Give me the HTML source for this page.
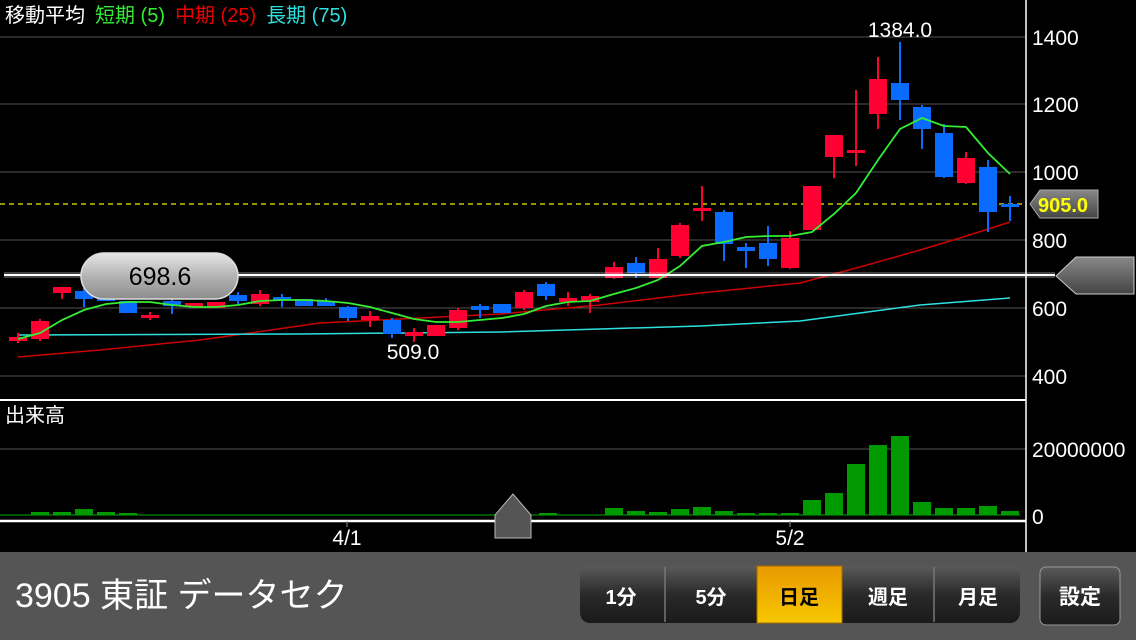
<!DOCTYPE html>
<html><head><meta charset="utf-8"><style>
body{margin:0;width:1136px;height:640px;background:#000;overflow:hidden;font-family:"Liberation Sans","Noto Sans CJK JP",sans-serif}
svg{position:absolute;left:0;top:0}
</style></head><body>
<svg width="1136" height="640" xmlns="http://www.w3.org/2000/svg" font-family="Liberation Sans, Noto Sans CJK JP, sans-serif">
<defs>
<linearGradient id="pill" x1="0" y1="0" x2="0" y2="1"><stop offset="0" stop-color="#e6e6e6"/><stop offset="0.5" stop-color="#b4b4b4"/><stop offset="1" stop-color="#8c8c8c"/></linearGradient>
<linearGradient id="btn" x1="0" y1="0" x2="0" y2="1"><stop offset="0" stop-color="#5a5a5a"/><stop offset="0.5" stop-color="#2a2a2a"/><stop offset="1" stop-color="#1a1a1a"/></linearGradient>
<linearGradient id="sel" x1="0" y1="0" x2="0" y2="1"><stop offset="0" stop-color="#e89800"/><stop offset="1" stop-color="#f8c800"/></linearGradient>
<linearGradient id="tag" x1="0" y1="0" x2="0" y2="1"><stop offset="0" stop-color="#888"/><stop offset="1" stop-color="#444"/></linearGradient>
</defs>
<g stroke="#555" stroke-width="1">
<line x1="0" y1="37" x2="1026" y2="37"/><line x1="0" y1="104" x2="1026" y2="104"/><line x1="0" y1="172" x2="1026" y2="172"/><line x1="0" y1="240" x2="1026" y2="240"/><line x1="0" y1="308" x2="1026" y2="308"/><line x1="0" y1="376" x2="1026" y2="376"/><line x1="0" y1="449" x2="1026" y2="449"/>
</g>
<line x1="1026" y1="0" x2="1026" y2="552" stroke="#fff" stroke-width="1.5"/>
<line x1="0" y1="400" x2="1026" y2="400" stroke="#fff" stroke-width="2"/>
<line x1="0" y1="521" x2="1026" y2="521" stroke="#fff" stroke-width="2.5"/>
<line x1="0" y1="515" x2="1020" y2="515" stroke="#0a0" stroke-width="1"/>
<line x1="0" y1="204" x2="1026" y2="204" stroke="#ee0" stroke-width="1.2" stroke-dasharray="5,4"/>
<polyline fill="none" stroke="#c00" stroke-width="1.5" points="18,357 100,350 200,340 320,323 420,318 500,314 600,305 700,293 800,283 860,267 920,250 960,238 1010,222"/>
<polyline fill="none" stroke="#2de0e0" stroke-width="1.5" points="18,335 300,334 500,332 600,329 700,326 800,321 860,313 920,305 1010,298"/>
<g fill="#f03" stroke="#f03" stroke-width="2">
<line x1="18" y1="333" x2="18" y2="343"/><rect x="9" y="337" width="18" height="4" stroke="none"/>
<line x1="40" y1="319" x2="40" y2="341"/><rect x="31" y="321" width="18" height="18" stroke="none"/>
<line x1="62" y1="287" x2="62" y2="299"/><rect x="53" y="287" width="18" height="6" stroke="none"/>
<line x1="150" y1="312" x2="150" y2="320"/><rect x="141" y="315" width="18" height="3" stroke="none"/>
<rect x="185" y="303" width="18" height="4" stroke="none"/>
<rect x="207" y="302" width="18" height="6" stroke="none"/>
<line x1="260" y1="290" x2="260" y2="306"/><rect x="251" y="294" width="18" height="10" stroke="none"/>
<line x1="370" y1="311" x2="370" y2="327"/><rect x="361" y="316" width="18" height="4" stroke="none"/>
<line x1="414" y1="328" x2="414" y2="342"/><rect x="405" y="332" width="18" height="4" stroke="none"/>
<rect x="427" y="325" width="18" height="11" stroke="none"/>
<line x1="458" y1="308" x2="458" y2="330"/><rect x="449" y="310" width="18" height="18" stroke="none"/>
<line x1="524" y1="290" x2="524" y2="310"/><rect x="515" y="292" width="18" height="16" stroke="none"/>
<line x1="568" y1="292" x2="568" y2="306"/><rect x="559" y="298" width="18" height="4" stroke="none"/>
<line x1="590" y1="294" x2="590" y2="313"/><rect x="581" y="296" width="18" height="6" stroke="none"/>
<line x1="614" y1="262" x2="614" y2="279"/><rect x="605" y="267" width="18" height="11" stroke="none"/>
<line x1="658" y1="248" x2="658" y2="278"/><rect x="649" y="259" width="18" height="19" stroke="none"/>
<line x1="680" y1="223" x2="680" y2="258"/><rect x="671" y="225" width="18" height="31" stroke="none"/>
<line x1="702" y1="186" x2="702" y2="221"/><rect x="693" y="208" width="18" height="3" stroke="none"/>
<line x1="790" y1="231" x2="790" y2="269"/><rect x="781" y="238" width="18" height="30" stroke="none"/>
<rect x="803" y="186" width="18" height="44" stroke="none"/>
<line x1="834" y1="135" x2="834" y2="178"/><rect x="825" y="135" width="18" height="22" stroke="none"/>
<line x1="856" y1="90" x2="856" y2="166"/><rect x="847" y="150" width="18" height="3" stroke="none"/>
<line x1="878" y1="57" x2="878" y2="129"/><rect x="869" y="79" width="18" height="35" stroke="none"/>
<line x1="966" y1="152" x2="966" y2="184"/><rect x="957" y="158" width="18" height="25" stroke="none"/>
</g>
<g fill="#0a6cff" stroke="#0a6cff" stroke-width="2">
<line x1="84" y1="288" x2="84" y2="307"/><rect x="75" y="291" width="18" height="8" stroke="none"/>
<rect x="97" y="297" width="18" height="4" stroke="none"/>
<rect x="119" y="301" width="18" height="12" stroke="none"/>
<line x1="172" y1="299" x2="172" y2="314"/><rect x="163" y="301" width="18" height="5" stroke="none"/>
<line x1="238" y1="292" x2="238" y2="304"/><rect x="229" y="295" width="18" height="6" stroke="none"/>
<line x1="282" y1="294" x2="282" y2="307"/><rect x="273" y="297" width="18" height="3" stroke="none"/>
<rect x="295" y="299" width="18" height="7" stroke="none"/>
<line x1="326" y1="298" x2="326" y2="306"/><rect x="317" y="301" width="18" height="5" stroke="none"/>
<line x1="348" y1="306" x2="348" y2="321"/><rect x="339" y="307" width="18" height="11" stroke="none"/>
<line x1="392" y1="318" x2="392" y2="338"/><rect x="383" y="320" width="18" height="14" stroke="none"/>
<line x1="480" y1="304" x2="480" y2="318"/><rect x="471" y="306" width="18" height="4" stroke="none"/>
<rect x="493" y="304" width="18" height="9" stroke="none"/>
<line x1="546" y1="282" x2="546" y2="300"/><rect x="537" y="284" width="18" height="12" stroke="none"/>
<line x1="636" y1="257" x2="636" y2="278"/><rect x="627" y="263" width="18" height="10" stroke="none"/>
<line x1="724" y1="210" x2="724" y2="261"/><rect x="715" y="212" width="18" height="32" stroke="none"/>
<line x1="746" y1="243" x2="746" y2="268"/><rect x="737" y="247" width="18" height="4" stroke="none"/>
<line x1="768" y1="226" x2="768" y2="266"/><rect x="759" y="243" width="18" height="16" stroke="none"/>
<line x1="900" y1="42" x2="900" y2="120"/><rect x="891" y="83" width="18" height="17" stroke="none"/>
<line x1="922" y1="105" x2="922" y2="149"/><rect x="913" y="107" width="18" height="22" stroke="none"/>
<line x1="944" y1="124" x2="944" y2="178"/><rect x="935" y="133" width="18" height="44" stroke="none"/>
<line x1="988" y1="160" x2="988" y2="232"/><rect x="979" y="167" width="18" height="45" stroke="none"/>
<line x1="1010" y1="196" x2="1010" y2="221"/><rect x="1001" y="204" width="18" height="3" stroke="none"/>
</g>
<polyline fill="none" stroke="#3e3" stroke-width="1.8" points="18,339 40,333 62,320 84,310 106,304 128,302 150,302 172,305 194,307 216,307 238,305 260,301 282,300 304,300 326,301 348,303 370,307 392,313 414,319 436,322 458,322 480,320 502,318 524,314 546,306 568,302 590,301 614,294 636,288 658,280 680,266 702,246 724,242 746,237 768,236 790,236 812,232 834,214 856,193 878,160 900,129 922,118 944,126 966,127 988,153 1010,174"/>
<g fill="#090">
<rect x="31" y="512" width="18" height="3"/><rect x="53" y="512" width="18" height="3"/><rect x="75" y="509" width="18" height="6"/><rect x="97" y="512" width="18" height="3"/><rect x="119" y="513" width="18" height="2"/>
<rect x="539" y="513" width="18" height="2"/>
<rect x="605" y="508" width="18" height="7"/><rect x="627" y="511" width="18" height="4"/><rect x="649" y="512" width="18" height="3"/><rect x="671" y="509" width="18" height="6"/><rect x="693" y="507" width="18" height="8"/><rect x="715" y="511" width="18" height="4"/><rect x="737" y="513" width="18" height="2"/><rect x="759" y="513" width="18" height="2"/><rect x="781" y="513" width="18" height="2"/>
<rect x="803" y="500" width="18" height="15"/><rect x="825" y="493" width="18" height="22"/><rect x="847" y="464" width="18" height="51"/><rect x="869" y="445" width="18" height="70"/><rect x="891" y="436" width="18" height="79"/><rect x="913" y="502" width="18" height="13"/><rect x="935" y="508" width="18" height="7"/><rect x="957" y="508" width="18" height="7"/><rect x="979" y="506" width="18" height="9"/><rect x="1001" y="511" width="18" height="4"/>
</g>
<line x1="4" y1="275" x2="1055" y2="275" stroke="#fff" stroke-width="6" opacity="0.25"/>
<line x1="4" y1="275" x2="1055" y2="275" stroke="#fff" stroke-width="2"/>
<rect x="81" y="253" width="157" height="46" rx="23" fill="url(#pill)" stroke="#ddd" stroke-width="1.5"/>
<text x="160" y="285" font-size="25" text-anchor="middle" fill="#000">698.6</text>
<polygon points="1056,276 1076,257 1134,257 1134,294 1076,294" fill="url(#tag)" stroke="#ccc" stroke-width="1"/>
<polygon points="1030,204 1040,190 1098,190 1098,218 1040,218" fill="url(#tag)" stroke="#aaa"/>
<text x="1038" y="212" font-size="20" font-weight="bold" fill="#ff0">905.0</text>
<g fill="#fff" font-size="21">
<text x="1032" y="45">1400</text><text x="1032" y="112">1200</text><text x="1032" y="180">1000</text><text x="1032" y="248">800</text><text x="1032" y="316">600</text><text x="1032" y="384">400</text>
<text x="1032" y="457">20000000</text><text x="1032" y="524">0</text>
<text x="900" y="37" text-anchor="middle">1384.0</text>
<text x="413" y="359" text-anchor="middle">509.0</text>
<text x="347" y="545" text-anchor="middle">4/1</text>
<text x="790" y="545" text-anchor="middle">5/2</text>
<text x="5" y="422" font-size="20">出来高</text>
</g>
<line x1="347" y1="521" x2="347" y2="527" stroke="#888"/><line x1="790" y1="521" x2="790" y2="527" stroke="#888"/>
<text x="5" y="22" font-size="20"><tspan fill="#fff">移動平均</tspan><tspan fill="#3e3" dx="10">短期 (5)</tspan><tspan fill="#e00" dx="10">中期 (25)</tspan><tspan fill="#2de0e0" dx="10">長期 (75)</tspan></text>
<polygon points="513,494 495,515 495,538 531,538 531,515" fill="#555" stroke="#bbb"/>
<rect x="0" y="552" width="1136" height="88" fill="#555"/>
<text x="15" y="607" font-size="34" fill="#fff">3905 東証 データセク</text>
<rect x="580" y="566" width="440" height="57" rx="10" fill="url(#btn)"/>
<rect x="757" y="566" width="85" height="57" fill="url(#sel)" stroke="#a66a00"/>
<g stroke="#777" stroke-width="1.5"><line x1="665" y1="567" x2="665" y2="622"/><line x1="934" y1="567" x2="934" y2="622"/></g>
<g font-size="20" font-weight="bold" text-anchor="middle" fill="#fff">
<text x="621" y="604">1分</text><text x="711" y="604">5分</text><text x="799" y="604" fill="#000">日足</text><text x="888" y="604">週足</text><text x="978" y="604">月足</text>
</g>
<rect x="1040" y="567" width="80" height="58" rx="6" fill="url(#btn)" stroke="#999"/>
<text x="1080" y="604" font-size="21" font-weight="bold" text-anchor="middle" fill="#fff">設定</text>
</svg>
</body></html>
